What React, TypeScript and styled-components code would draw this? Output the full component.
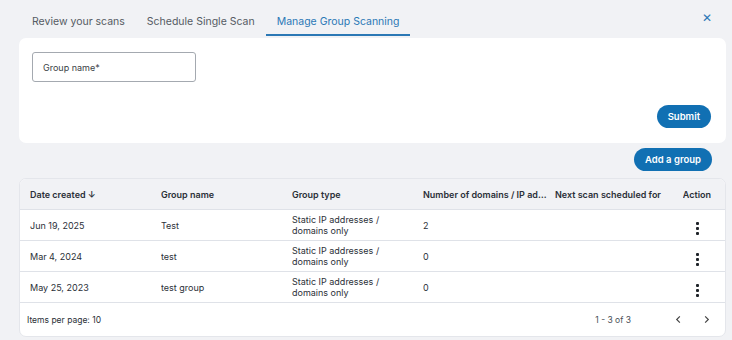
import React from 'react'
import styled, { createGlobalStyle } from 'styled-components'

const GlobalStyle = createGlobalStyle`
  body {
    margin: 0;
    background: #f1f2f5;
    font-family: Inter, 'Noto Sans', sans-serif;
    color: #2b3038;
  }
`

const blue = '#1170b3'

const Page = styled.div`
  padding: 0 6px 0 19px;
`

const TabBar = styled.div`
  display: flex;
  align-items: stretch;
  height: 38px;
  padding-left: 2px;
`

const Tab = styled.div<{ active?: boolean }>`
  display: flex;
  align-items: center;
  padding: 3px 11px 0;
  font-size: 10.5px;
  color: ${(p) => (p.active ? '#2b78b5' : '#555b63')};
  border-bottom: 2px solid ${(p) => (p.active ? '#2b78b5' : 'transparent')};
  height: 26px;
  margin-top: 5px;
  white-space: nowrap;
`

const CloseBtn = styled.div`
  margin-left: auto;
  margin-right: 14px;
  padding-top: 10px;
  color: #2b78b5;
  font-size: 12px;
`

const Card = styled.div`
  background: #fff;
  border-radius: 7px;
`

const FormCard = styled(Card)`
  height: 105px;
  box-sizing: border-box;
  padding: 14px 15px 15px 13px;
  display: flex;
  flex-direction: column;
  justify-content: space-between;
`

const InputBox = styled.div`
  width: 164px;
  height: 30px;
  box-sizing: border-box;
  border: 1px solid #a4a9b0;
  border-radius: 3px;
  display: flex;
  align-items: center;
  padding-left: 10px;
  font-size: 9px;
  color: #3a3f46;
`

const Actions = styled.div`
  display: flex;
  justify-content: flex-end;
`

const PillButton = styled.button`
  background: ${blue};
  color: #fff;
  border: none;
  border-radius: 12px;
  height: 23px;
  padding: 0 11px;
  font-family: inherit;
  font-size: 9.5px;
  font-weight: 600;
`

const ToolRow = styled.div`
  display: flex;
  justify-content: flex-end;
  padding: 5px 14px 7px 0;
`

const TableCard = styled(Card)`
  border: 1px solid #e4e6eb;
  overflow: hidden;
`

const Grid = styled.div<{ head?: boolean }>`
  display: grid;
  grid-template-columns: 131px 131px 131px 132px 1fr auto;
  padding: 0 14px 0 10px;
  align-items: center;
  height: 30px;
  background: ${(p) => (p.head ? '#f1f2f5' : '#fff')};
  border-bottom: 1px solid #dfe2e8;
  font-size: 9px;
  font-weight: ${(p) => (p.head ? 600 : 400)};
  color: #2b3038;
`

const Cell = styled.div<{ right?: boolean }>`
  line-height: 11px;
  text-align: ${(p) => (p.right ? 'right' : 'left')};
  white-space: nowrap;
  overflow: hidden;
  text-overflow: ellipsis;
  padding-right: ${(p) => (p.right ? 0 : 8)}px;
`

const Wrap = styled.div`
  line-height: 11px;
  width: 110px;
`

const Dots = styled.span`
  display: inline-flex;
  flex-direction: column;
  gap: 2px;
  margin-right: 12px;
  & > i {
    width: 3px;
    height: 3px;
    background: #1f2329;
    border-radius: 1px;
  }
`

const Footer = styled.div`
  display: flex;
  align-items: center;
  height: 33px;
  padding: 0 14px 0 7px;
  font-size: 8.5px;
  color: #2b3038;
`

const Range = styled.span`
  margin-left: auto;
  margin-right: 24px;
  color: #4a4f57;
`

const Chevron = styled.svg`
  width: 9px;
  height: 9px;
  margin-left: 19px;
`

const rows = [
  { date: 'Jun 19, 2025', name: 'Test', count: '2' },
  { date: 'Mar 4, 2024', name: 'test', count: '0' },
  { date: 'May 25, 2023', name: 'test group', count: '0' },
]

const App = (): JSX.Element => (
  <>
    <GlobalStyle />
    <Page>
      <TabBar>
        <Tab>Review your scans</Tab>
        <Tab>Schedule Single Scan</Tab>
        <Tab active>Manage Group Scanning</Tab>
        <CloseBtn>✕</CloseBtn>
      </TabBar>

      <FormCard>
        <InputBox>Group name*</InputBox>
        <Actions>
          <PillButton>Submit</PillButton>
        </Actions>
      </FormCard>

      <ToolRow>
        <PillButton>Add a group</PillButton>
      </ToolRow>

      <TableCard>
        <Grid head>
          <Cell>Date created ↓</Cell>
          <Cell>Group name</Cell>
          <Cell>Group type</Cell>
          <Cell>Number of domains / IP addresses</Cell>
          <Cell>Next scan scheduled for</Cell>
          <Cell right>Action</Cell>
        </Grid>
        {rows.map((row) => (
          <Grid key={row.date}>
            <Cell>{row.date}</Cell>
            <Cell>{row.name}</Cell>
            <Wrap>Static IP addresses / domains only</Wrap>
            <Cell>{row.count}</Cell>
            <Cell />
            <Cell right>
              <Dots>
                <i />
                <i />
                <i />
              </Dots>
            </Cell>
          </Grid>
        ))}
        <Footer>
          Items per page: 10
          <Range>1 - 3 of 3</Range>
          <Chevron viewBox="0 0 10 10">
            <path d="M6.5 1.5 3 5l3.5 3.5" fill="none" stroke="#444" strokeWidth="1.3" />
          </Chevron>
          <Chevron viewBox="0 0 10 10">
            <path d="M3.5 1.5 7 5 3.5 8.5" fill="none" stroke="#444" strokeWidth="1.3" />
          </Chevron>
        </Footer>
      </TableCard>
    </Page>
  </>
)

export default App
